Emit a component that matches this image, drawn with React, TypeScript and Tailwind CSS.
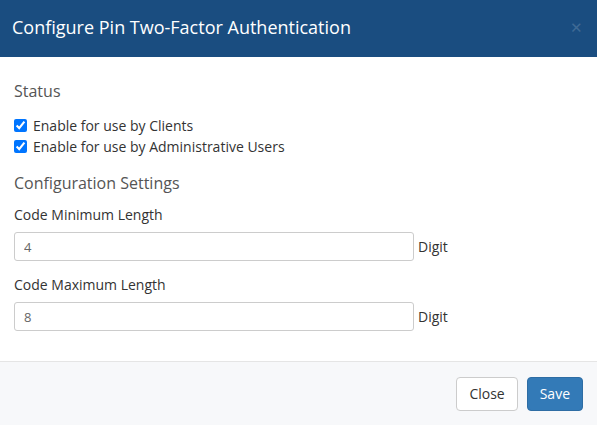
import React from 'react'

function Field({ label, value }: { label: string; value: string }) {
  return (
    <div className="mb-[14px]">
      <label className="block text-[14px] text-[#333] leading-[20px] mb-[7px]">{label}</label>
      <div className="flex items-center">
        <input
          readOnly
          value={value}
          className="w-[400px] h-[29px] border border-[#ccc] rounded-[3px] px-[9px] text-[13px] text-[#666] outline-none"
        />
        <span className="ml-[4px] text-[14px] text-[#333]">Digit</span>
      </div>
    </div>
  )
}

export default function App() {
  return (
    <div className="w-[597px] h-[425px] bg-white flex flex-col" style={{ fontFamily: '"Open Sans", sans-serif' }}>
      <div className="h-[57px] bg-[#1a4d80] flex items-center justify-between pl-[12px] pr-[14px] pb-[3px] shrink-0">
        <h4 className="text-[18px] text-white leading-none">Configure Pin Two-Factor Authentication</h4>
        <span className="text-[#3f6a95] text-[15px] leading-none">✕</span>
      </div>
      <div className="flex-1 px-[14px] pt-[22px]">
        <h5 className="text-[16px] text-[#555] leading-[24px] mb-[12px]">Status</h5>
        <label className="flex items-center h-[21px] text-[14px] text-[#333]">
          <input type="checkbox" defaultChecked className="w-[13px] h-[13px] mr-[6px] accent-[#0075ff]" />
          Enable for use by Clients
        </label>
        <label className="flex items-center h-[21px] text-[14px] text-[#333]">
          <input type="checkbox" defaultChecked className="w-[13px] h-[13px] mr-[6px] accent-[#0075ff]" />
          Enable for use by Administrative Users
        </label>
        <h5 className="text-[16px] text-[#555] leading-[24px] mt-[14px] mb-[10px]">Configuration Settings</h5>
        <Field label="Code Minimum Length" value="4" />
        <Field label="Code Maximum Length" value="8" />
      </div>
      <div className="h-[64px] shrink-0 bg-[#f7f8fa] border-t border-[#e5e5e5] flex items-center justify-end gap-[9px] pr-[14px]">
        <button className="h-[34px] px-[12px] bg-white border border-[#ccc] rounded-[4px] text-[14px] text-[#333]">Close</button>
        <button className="h-[34px] px-[12px] bg-[#337ab7] border border-[#2e6da4] rounded-[4px] text-[14px] text-white">Save</button>
      </div>
    </div>
  )
}
